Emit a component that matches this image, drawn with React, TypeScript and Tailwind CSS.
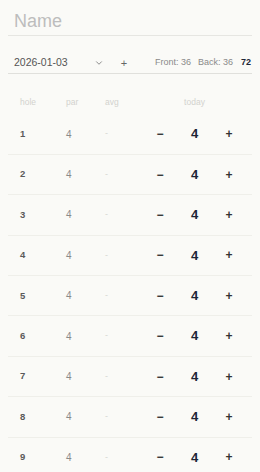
import { ChevronDown } from 'lucide-react'

const holes = [1, 2, 3, 4, 5, 6, 7, 8, 9]

function HoleRow({ hole }: { hole: number }) {
  return (
    <div className="grid h-[40.4px] grid-cols-[46px_39px_40px_1fr] items-center border-b border-[#efefea] pl-[12px] pr-[8px]">
      <span className="text-[9.5px] font-bold text-[#5a5a5a]">{hole}</span>
      <span className="text-[10px] text-[#8a8a8a]">4</span>
      <span className="text-[9px] text-[#d6d6d2]">-</span>
      <div className="flex items-center justify-between px-[8px]">
        <button type="button" className="w-[14px] text-center text-[12px] font-semibold text-[#333]">
          −
        </button>
        <span className="text-[13px] font-bold text-[#1c2536]">4</span>
        <button type="button" className="w-[14px] text-center text-[12px] font-semibold text-[#333]">
          +
        </button>
      </div>
    </div>
  )
}

function App() {
  return (
    <main className="min-h-screen w-full bg-[#fafaf7] px-[8px] font-['Liberation_Sans',Arial,sans-serif]">
      <div className="border-b border-[#e6e6e2] pt-[9px] pb-[1px]">
        <input
          placeholder="Name"
          className="h-[24px] w-full bg-transparent px-[6px] text-[18px] text-[#333] placeholder:text-[#bdbdbd] outline-none"
        />
      </div>

      <div className="mt-[18px] flex h-[20px] items-center border-b border-[#e0e0dc] pl-[6px] pr-[1px]">
        <span className="text-[10.5px] text-[#555]">2026-01-03</span>
        <ChevronDown className="ml-[26px] h-[10px] w-[10px] text-[#777]" strokeWidth={2} />
        <span className="ml-[17px] text-[11px] text-[#666]">+</span>
        <div className="ml-auto flex items-center gap-[7px] text-[9px] text-[#8a8a8a]">
          <span>Front: 36</span>
          <span>Back: 36</span>
          <span className="ml-[1px] text-[9px] font-bold text-[#1c2536]">72</span>
        </div>
      </div>

      <div className="mt-[17px] grid h-[24px] grid-cols-[46px_39px_40px_1fr] items-center pl-[12px] pr-[8px] text-[8.5px] text-[#d2d2ce]">
        <span>hole</span>
        <span>par</span>
        <span>avg</span>
        <span className="text-center">today</span>
      </div>

      <div>
        {holes.map((h) => (
          <HoleRow key={h} hole={h} />
        ))}
      </div>
    </main>
  )
}

export default App
